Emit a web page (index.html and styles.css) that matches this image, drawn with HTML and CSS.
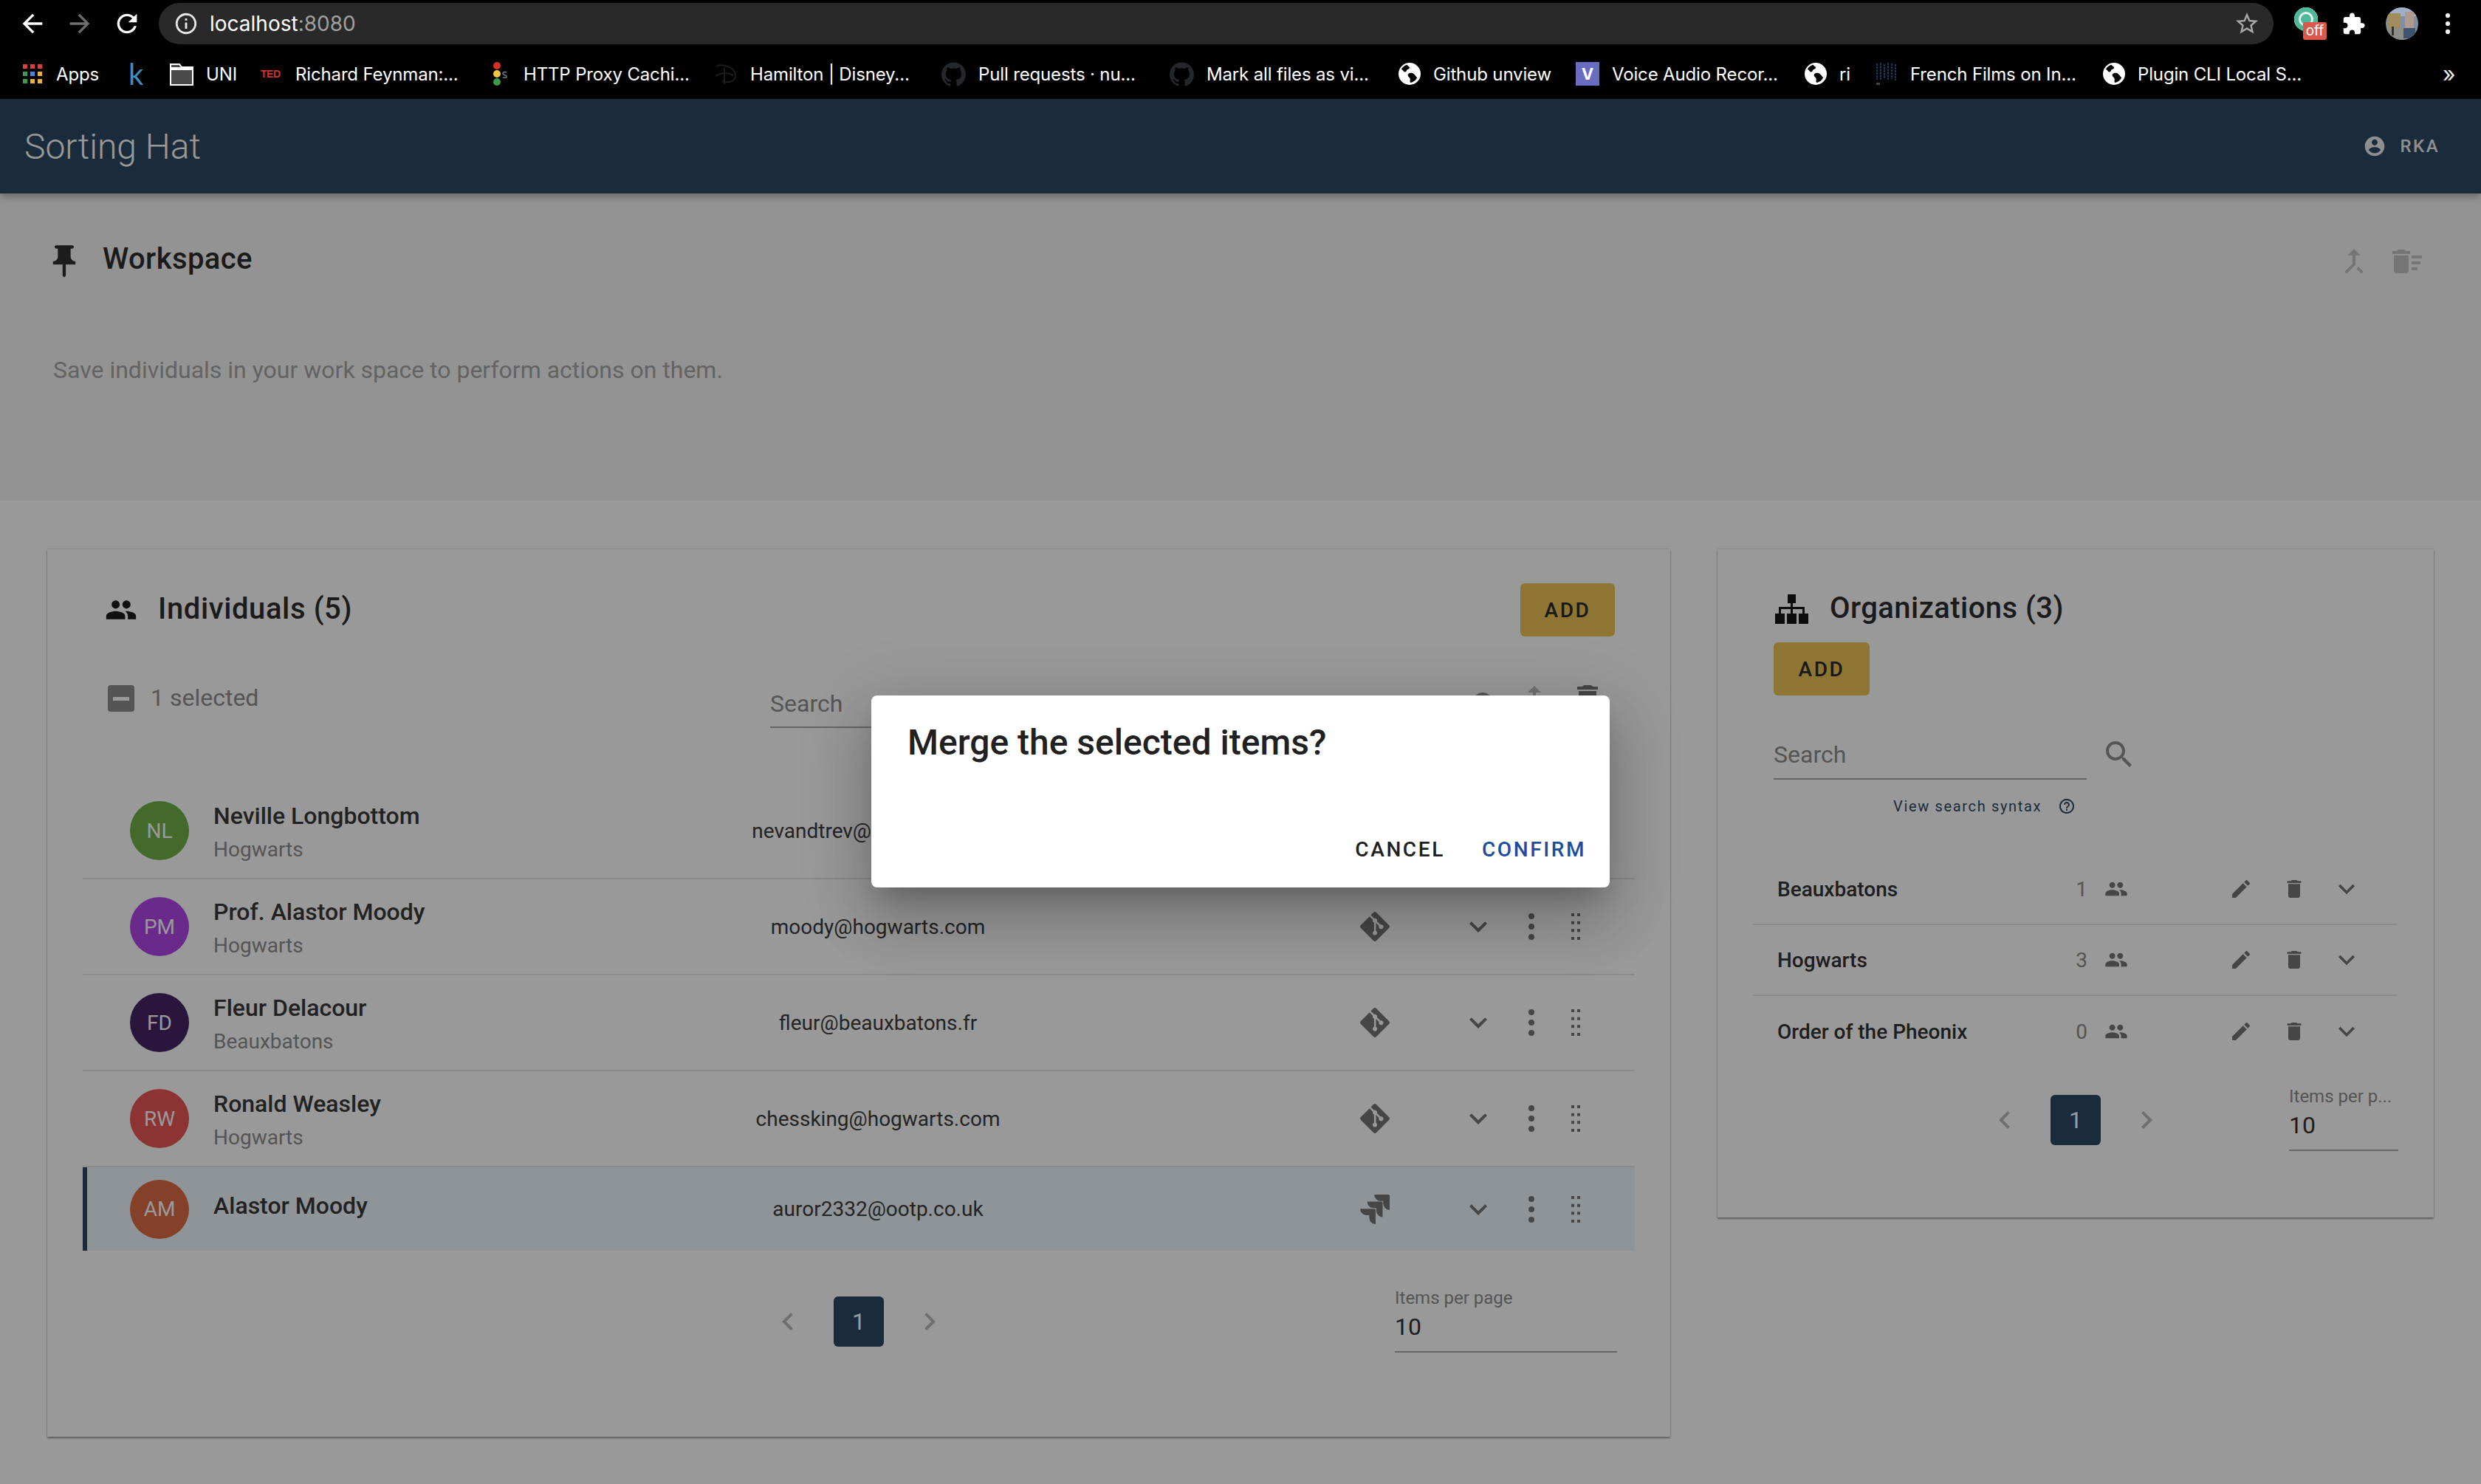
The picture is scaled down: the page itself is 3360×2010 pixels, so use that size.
FILE: index.html
```html
<!DOCTYPE html>
<html lang="en">
<head>
<meta charset="utf-8">
<title>Sorting Hat</title>
<link rel="stylesheet" href="styles.css">
</head>
<body>
<svg class="sprite" xmlns="http://www.w3.org/2000/svg">
  <symbol id="i-back" viewBox="0 0 24 24"><path d="M20 11H7.83l5.59-5.59L12 4l-8 8 8 8 1.41-1.41L7.83 13H20v-2z"/></symbol>
  <symbol id="i-forward" viewBox="0 0 24 24"><path d="M4 11h12.17l-5.59-5.59L12 4l8 8-8 8-1.41-1.41L16.17 13H4v-2z"/></symbol>
  <symbol id="i-reload" viewBox="0 0 24 24"><path d="M17.65 6.35C16.2 4.9 14.21 4 12 4c-4.42 0-7.99 3.58-7.99 8s3.57 8 7.99 8c3.73 0 6.84-2.55 7.73-6h-2.08c-.82 2.33-3.04 4-5.65 4-3.31 0-6-2.69-6-6s2.69-6 6-6c1.66 0 3.14.69 4.22 1.78L13 11h7V4l-2.35 2.35z"/></symbol>
  <symbol id="i-info" viewBox="0 0 24 24"><path d="M11 7h2v2h-2zm0 4h2v6h-2zm1-9C6.48 2 2 6.48 2 12s4.48 10 10 10 10-4.48 10-10S17.52 2 12 2zm0 18c-4.41 0-8-3.59-8-8s3.59-8 8-8 8 3.59 8 8-3.59 8-8 8z"/></symbol>
  <symbol id="i-star" viewBox="0 0 24 24"><path d="M22 9.24l-7.19-.62L12 2 9.19 8.63 2 9.24l5.46 4.73L5.82 21 12 17.27 18.18 21l-1.63-7.03L22 9.24zM12 15.4l-3.76 2.27 1-4.28-3.32-2.88 4.38-.38L12 6.1l1.71 4.04 4.38.38-3.32 2.88 1 4.28L12 15.4z"/></symbol>
  <symbol id="i-puzzle" viewBox="0 0 24 24"><path d="M20.5 11H19V7c0-1.1-.9-2-2-2h-4V3.5C13 2.12 11.88 1 10.5 1S8 2.12 8 3.5V5H4c-1.1 0-1.99.9-1.99 2v3.8H3.5c1.49 0 2.7 1.21 2.7 2.7s-1.21 2.7-2.7 2.7H2V20c0 1.1.9 2 2 2h3.8v-1.5c0-1.49 1.21-2.7 2.7-2.7 1.49 0 2.7 1.21 2.7 2.7V22H17c1.1 0 2-.9 2-2v-4h1.5c1.38 0 2.5-1.12 2.5-2.5S21.88 11 20.5 11z"/></symbol>
  <symbol id="i-github" viewBox="0 0 24 24"><path d="M12 .297c-6.63 0-12 5.373-12 12 0 5.303 3.438 9.8 8.205 11.385.6.113.82-.258.82-.577 0-.285-.01-1.04-.015-2.04-3.338.724-4.042-1.61-4.042-1.61C4.422 18.07 3.633 17.7 3.633 17.7c-1.087-.744.084-.729.084-.729 1.205.084 1.838 1.236 1.838 1.236 1.07 1.835 2.809 1.305 3.495.998.108-.776.417-1.305.76-1.605-2.665-.3-5.466-1.332-5.466-5.93 0-1.31.465-2.38 1.235-3.22-.135-.303-.54-1.523.105-3.176 0 0 1.005-.322 3.3 1.23.96-.267 1.98-.399 3-.405 1.02.006 2.04.138 3 .405 2.28-1.552 3.285-1.23 3.285-1.23.645 1.653.24 2.873.12 3.176.765.84 1.23 1.91 1.23 3.22 0 4.61-2.805 5.625-5.475 5.92.42.36.81 1.096.81 2.22 0 1.606-.015 2.896-.015 3.286 0 .315.21.69.825.57C20.565 22.092 24 17.592 24 12.297c0-6.627-5.373-12-12-12"/></symbol>
  <symbol id="i-globe" viewBox="0 0 24 24"><circle cx="12" cy="12" r="12" fill="#fff"/><path fill="#000" d="M9 2.2C6.5 3 4.4 4.7 3.1 7c1 .4 1.6 1.2 2.2 2 .9 1.200 2.200 1.300 3 .4.500-.600.200-1.300.900-1.900 1-.800 2.400-.800 2.800-2 .300-1-.800-1.500-1.500-2-.500-.400-.900-.900-1.500-1.300zM14 11c-1.300-.300-2.700.200-3.500 1.200-.700 1-.300 2.200.500 3 .800.800 1.500 1.300 1.600 2.500.100 1.100-.300 2-.100 3.100.200.800.800.700 1.400.500 2.700-.900 4.700-2.500 6-4.800.300-.700-.300-1.100-.800-1.600-1.300-1.200-2-3.300-5.100-3.900z"/></symbol>
  <symbol id="i-person" viewBox="0 0 24 24"><path d="M12 2C6.48 2 2 6.48 2 12s4.48 10 10 10 10-4.48 10-10S17.52 2 12 2zm0 3c1.66 0 3 1.340 3 3s-1.340 3-3 3-3-1.340-3-3 1.340-3 3-3zm0 14.200c-2.500 0-4.710-1.280-6-3.220.030-1.990 4-3.080 6-3.080 1.990 0 5.970 1.090 6 3.080-1.290 1.940-3.500 3.220-6 3.220z"/></symbol>
  <symbol id="i-pin" viewBox="0 0 24 24"><path d="M16 9V4h1c.55 0 1-.45 1-1s-.45-1-1-1H7c-.55 0-1 .45-1 1s.45 1 1 1h1v5c0 1.660-1.340 3-3 3v2h5.970v7l1 1 1-1v-7H19v-2c-1.660 0-3-1.340-3-3z"/></symbol>
  <symbol id="i-merge" viewBox="0 0 24 24"><path d="M17 20.410L18.410 19 15 15.590 13.590 17 17 20.410zM7.500 8H11v5.590L5.590 19 7 20.410l6-6V8h3.500L12 3.500 7.500 8z"/></symbol>
  <symbol id="i-sweep" viewBox="0 0 24 24"><path d="M15 16h4v2h-4zm0-8h7v2h-7zm0 4h6v2h-6zM3 18c0 1.100.9 2 2 2h6c1.100 0 2-.9 2-2V8H3v10zM14 5h-3l-1-1H6L5 5H2v2h12z"/></symbol>
  <symbol id="i-people" viewBox="0 0 24 24"><path d="M16 11c1.660 0 2.990-1.340 2.990-3S17.660 5 16 5c-1.660 0-3 1.340-3 3s1.340 3 3 3zm-8 0c1.660 0 2.990-1.340 2.990-3S9.660 5 8 5C6.340 5 5 6.340 5 8s1.340 3 3 3zm0 2c-2.330 0-7 1.170-7 3.500V19h14v-2.500c0-2.330-4.670-3.500-7-3.500zm8 0c-.29 0-.62.020-.97.050 1.160.84 1.970 1.970 1.970 3.450V19h6v-2.500c0-2.330-4.670-3.500-7-3.500z"/></symbol>
  <symbol id="i-delete" viewBox="0 0 24 24"><path d="M6 19c0 1.100.9 2 2 2h8c1.100 0 2-.9 2-2V7H6v12zM19 4h-3.500l-1-1h-5l-1 1H5v2h14V4z"/></symbol>
  <symbol id="i-search" viewBox="0 0 24 24"><path d="M15.500 14h-.79l-.28-.27C15.410 12.590 16 11.110 16 9.500 16 5.910 13.090 3 9.500 3S3 5.910 3 9.500 5.910 16 9.500 16c1.610 0 3.090-.59 4.230-1.570l.27.28v.79l5 4.990L20.490 19l-4.990-5zm-6 0C7.010 14 5 11.990 5 9.500S7.010 5 9.500 5 14 7.010 14 9.500 11.990 14 9.500 14z"/></symbol>
  <symbol id="i-edit" viewBox="0 0 24 24"><path d="M3 17.250V21h3.750L17.810 9.940l-3.750-3.750L3 17.250zM20.710 7.040c.39-.39.39-1.020 0-1.410l-2.340-2.340c-.39-.39-1.020-.39-1.410 0l-1.830 1.830 3.750 3.750 1.830-1.830z"/></symbol>
  <symbol id="i-expand" viewBox="0 0 24 24"><path d="M16.590 8.590L12 13.170 7.410 8.590 6 10l6 6 6-6z"/></symbol>
  <symbol id="i-left" viewBox="0 0 24 24"><path d="M15.410 7.410L14 6l-6 6 6 6 1.410-1.410L10.830 12z"/></symbol>
  <symbol id="i-right" viewBox="0 0 24 24"><path d="M8.590 7.410L10 6l6 6-6 6-1.410-1.410L13.170 12z"/></symbol>
  <symbol id="i-help" viewBox="0 0 24 24"><path d="M11 18h2v-2h-2v2zm1-16C6.480 2 2 6.480 2 12s4.480 10 10 10 10-4.480 10-10S17.520 2 12 2zm0 18c-4.410 0-8-3.590-8-8s3.590-8 8-8 8 3.590 8 8-3.590 8-8 8zm0-14c-2.210 0-4 1.790-4 4h2c0-1.100.9-2 2-2s2 .9 2 2c0 2-3 1.750-3 5h2c0-2.250 3-2.500 3-5 0-2.210-1.790-4-4-4z"/></symbol>
  <symbol id="i-git" viewBox="0 0 24 24"><path d="M23.546 10.930L13.067.452c-.604-.603-1.582-.603-2.188 0L8.708 2.627l2.760 2.760c.645-.215 1.379-.07 1.889.441.516.515.658 1.258.438 1.900l2.658 2.660c.645-.223 1.387-.078 1.900.435.721.720.721 1.884 0 2.604-.719.719-1.881.719-2.600 0-.539-.541-.674-1.337-.404-1.996L12.860 8.955v6.525c.176.086.342.203.488.348.713.721.713 1.883 0 2.600-.719.721-1.889.721-2.609 0-.719-.719-.719-1.879 0-2.598.182-.18.387-.316.605-.406V8.835c-.217-.091-.424-.222-.6-.401-.545-.545-.676-1.342-.396-2.009L7.636 3.700.45 10.881c-.6.605-.6 1.584 0 2.189l10.480 10.477c.604.604 1.582.604 2.186 0l10.430-10.430c.605-.603.605-1.582 0-2.187"/></symbol>
  <symbol id="i-jira" viewBox="0 0 24 24"><path d="M11.571 11.513H0a5.218 5.218 0 0 0 5.232 5.215h2.130v2.057A5.215 5.215 0 0 0 12.575 24V12.518a1.005 1.005 0 0 0-1.005-1.005zm5.723-5.756H5.736a5.215 5.215 0 0 0 5.215 5.214h2.129v2.058a5.218 5.218 0 0 0 5.215 5.214V6.758a1.001 1.001 0 0 0-1.001-1.001zM23.013 0H11.455a5.215 5.215 0 0 0 5.215 5.215h2.129v2.057A5.215 5.215 0 0 0 24 12.483V1.005A1.001 1.001 0 0 0 23.013 0Z"/></symbol>
  <symbol id="i-kebab" viewBox="0 0 8 36"><circle cx="4" cy="4" r="4"/><circle cx="4" cy="18" r="4"/><circle cx="4" cy="32" r="4"/></symbol>
  <symbol id="i-drag" viewBox="0 0 12 36"><path d="M0 0h4v4H0zM8 0h4v4H8zM0 10.670h4v4H0zM8 10.670h4v4H8zM0 21.330h4v4H0zM8 21.330h4v4H8zM0 32h4v4H0zM8 32h4v4H8z"/></symbol>
  <symbol id="i-sitemap" viewBox="0 0 45 40"><path d="M17 0h11v12h-11zM21 12h3v6h-3zM5 17h35v3H5zM5 20h3v6H5zM21 20h3v6h-3zM37 20h3v6h-3zM0 26h13v14H0zM16 26h13v14H16zM32 26h13v14H32z"/></symbol>
</svg>

<header class="browser">
  <div class="toolbar">
    <svg class="nav-icon"><use href="#i-back"/></svg>
    <svg class="nav-icon nav-off"><use href="#i-forward"/></svg>
    <svg class="nav-icon"><use href="#i-reload"/></svg>
    <div class="urlbar">
      <svg class="url-info"><use href="#i-info"/></svg>
      <span class="url-text">localhost<span class="url-port">:8080</span></span>
      <svg class="url-star"><use href="#i-star"/></svg>
    </div>
    <div class="ext">
      <div class="ext-grammar"><span class="ext-ring"></span><span class="ext-off">off</span></div>
      <svg class="ext-puzzle"><use href="#i-puzzle"/></svg>
      <svg class="ext-avatar" viewBox="0 0 44 44">
        <defs><clipPath id="avatar-clip"><circle cx="22" cy="22" r="22"/></clipPath></defs>
        <g clip-path="url(#avatar-clip)">
          <rect width="44" height="44" fill="#7f8fa8"/>
          <rect x="0" y="0" width="44" height="12" fill="#9fb0c8"/>
          <rect x="2" y="8" width="18" height="20" fill="#a08c5c"/>
          <rect x="26" y="6" width="12" height="22" fill="#b09a90"/>
          <rect x="0" y="28" width="44" height="16" fill="#8c8c88"/>
          <rect x="24" y="28" width="16" height="14" fill="#3c5470"/>
          <rect x="8" y="26" width="3" height="12" fill="#38302c"/>
        </g>
      </svg>
      <svg class="ext-menu"><use href="#i-kebab"/></svg>
    </div>
  </div>
  <nav class="bookmarks">
    <div class="bm">
      <span class="bm-apps"><i class="r"></i><i class="r"></i><i class="r"></i><i class="g"></i><i class="b"></i><i class="y"></i><i class="g"></i><i class="y"></i><i class="y"></i></span>
      <span class="bm-label">Apps</span>
    </div>
    <div class="bm"><span class="bm-k">k</span></div>
    <div class="bm">
      <svg class="bm-folder" viewBox="0 0 32 32"><path d="M1 3h12l3 4h15v24H1z" fill="#4a4a4a" stroke="#fff" stroke-width="2"/><path d="M1 7h30v4H1z" fill="#fff"/></svg>
      <span class="bm-label">UNI</span>
    </div>
    <div class="bm"><span class="bm-ted">TED</span><span class="bm-label">Richard Feynman:...</span></div>
    <div class="bm">
      <svg class="bm-traffic" viewBox="0 0 24 32"><circle cx="5" cy="5" r="5" fill="#d93025"/><circle cx="5" cy="16" r="5" fill="#f2c53d"/><circle cx="5" cy="27" r="5" fill="#3f9a44"/><path d="M13 20.500c1 1 5 1.500 5-.8 0-2.500-5-1.500-5-4.200 0-2.300 3.800-2.300 5-1.200" fill="none" stroke="#666" stroke-width="2"/></svg>
      <span class="bm-label">HTTP Proxy Cachi...</span>
    </div>
    <div class="bm">
      <svg class="bm-disney" viewBox="0 0 34 32"><path d="M4 6c8-4 26 0 26 13 0 7-10 10-18 7M15 7v23M3 19c8-6 22-4 24 0" fill="none" stroke="#1c1c1c" stroke-width="2"/></svg>
      <span class="bm-label">Hamilton | Disney...</span>
    </div>
    <div class="bm"><svg class="bm-hub"><use href="#i-github"/></svg><span class="bm-label">Pull requests · nu...</span></div>
    <div class="bm"><svg class="bm-hub"><use href="#i-github"/></svg><span class="bm-label">Mark all files as vi...</span></div>
    <div class="bm"><svg class="bm-globe"><use href="#i-globe"/></svg><span class="bm-label">Github unview</span></div>
    <div class="bm"><span class="bm-v">V</span><span class="bm-label">Voice Audio Recor...</span></div>
    <div class="bm"><svg class="bm-globe"><use href="#i-globe"/></svg><span class="bm-label">ri</span></div>
    <div class="bm">
      <svg class="bm-inst" viewBox="0 0 30 32"><path d="M2 2v22M7 1v23M12 3v20M17 1v24M22 2v21M27 3v22" stroke="#1f4c80" stroke-width="1.500" stroke-dasharray="3 1"/><path d="M1 28h5v3H1z" fill="#444"/></svg>
      <span class="bm-label">French Films on In...</span>
    </div>
    <div class="bm"><svg class="bm-globe"><use href="#i-globe"/></svg><span class="bm-label">Plugin CLI Local S...</span></div>
    <div class="bm"><span class="bm-more">»</span></div>
  </nav>
</header>

<div class="app">
  <header class="appbar">
    <h1 class="app-title">Sorting Hat</h1>
    <div class="user">
      <svg class="user-icon"><use href="#i-person"/></svg>
      <span class="user-name">RKA</span>
    </div>
  </header>

  <section class="workspace">
    <div class="ws-head">
      <svg class="ws-pin"><use href="#i-pin"/></svg>
      <h2 class="ws-title">Workspace</h2>
      <div class="ws-actions">
        <svg class="ws-act"><use href="#i-merge"/></svg>
        <svg class="ws-act"><use href="#i-sweep"/></svg>
      </div>
    </div>
    <p class="ws-text">Save individuals in your work space to perform actions on them.</p>
  </section>

  <main class="boards">
    <section class="card card-ind">
      <div class="ind-head">
        <svg class="ind-icon"><use href="#i-people"/></svg>
        <h2 class="card-title">Individuals (5)</h2>
        <button class="add-btn">ADD</button>
      </div>
      <div class="ind-tools">
        <span class="check"><span class="check-dash"></span></span>
        <span class="sel-label">1 selected</span>
        <div class="search-col">
          <div class="field"><span class="field-text">Search</span></div>
        </div>
        <svg class="tool tool-search"><use href="#i-search"/></svg>
        <svg class="tool tool-merge"><use href="#i-merge"/></svg>
        <svg class="tool tool-del"><use href="#i-delete"/></svg>
      </div>
      <div class="ind-list">
        <article class="person">
          <span class="avatar av-nl">NL</span>
          <div class="p-name"><div class="p-title">Neville Longbottom</div><div class="p-org">Hogwarts</div></div>
          <div class="p-mail">nevandtrev@hogwarts.com</div>
          <svg class="p-src"><use href="#i-git"/></svg>
          <svg class="p-exp"><use href="#i-expand"/></svg>
          <svg class="p-menu"><use href="#i-kebab"/></svg>
          <svg class="p-drag"><use href="#i-drag"/></svg>
        </article>
        <article class="person">
          <span class="avatar av-pm">PM</span>
          <div class="p-name"><div class="p-title">Prof. Alastor Moody</div><div class="p-org">Hogwarts</div></div>
          <div class="p-mail">moody@hogwarts.com</div>
          <svg class="p-src"><use href="#i-git"/></svg>
          <svg class="p-exp"><use href="#i-expand"/></svg>
          <svg class="p-menu"><use href="#i-kebab"/></svg>
          <svg class="p-drag"><use href="#i-drag"/></svg>
        </article>
        <article class="person">
          <span class="avatar av-fd">FD</span>
          <div class="p-name"><div class="p-title">Fleur Delacour</div><div class="p-org">Beauxbatons</div></div>
          <div class="p-mail">fleur@beauxbatons.fr</div>
          <svg class="p-src"><use href="#i-git"/></svg>
          <svg class="p-exp"><use href="#i-expand"/></svg>
          <svg class="p-menu"><use href="#i-kebab"/></svg>
          <svg class="p-drag"><use href="#i-drag"/></svg>
        </article>
        <article class="person">
          <span class="avatar av-rw">RW</span>
          <div class="p-name"><div class="p-title">Ronald Weasley</div><div class="p-org">Hogwarts</div></div>
          <div class="p-mail">chessking@hogwarts.com</div>
          <svg class="p-src"><use href="#i-git"/></svg>
          <svg class="p-exp"><use href="#i-expand"/></svg>
          <svg class="p-menu"><use href="#i-kebab"/></svg>
          <svg class="p-drag"><use href="#i-drag"/></svg>
        </article>
        <article class="person person-sel">
          <span class="avatar av-am">AM</span>
          <div class="p-name"><div class="p-title">Alastor Moody</div></div>
          <div class="p-mail">auror2332@ootp.co.uk</div>
          <svg class="p-src"><use href="#i-jira"/></svg>
          <svg class="p-exp"><use href="#i-expand"/></svg>
          <svg class="p-menu"><use href="#i-kebab"/></svg>
          <svg class="p-drag"><use href="#i-drag"/></svg>
        </article>
      </div>
      <div class="pager pager-ind">
        <div class="pages">
          <svg class="pg-arrow"><use href="#i-left"/></svg>
          <span class="pg-num">1</span>
          <svg class="pg-arrow"><use href="#i-right"/></svg>
        </div>
        <div class="per-page per-wide">
          <div class="per-label">Items per page</div>
          <div class="per-value">10</div>
        </div>
      </div>
    </section>

    <section class="card card-org">
      <div class="org-head">
        <svg class="org-icon"><use href="#i-sitemap"/></svg>
        <h2 class="card-title">Organizations (3)</h2>
      </div>
      <button class="add-btn add-org">ADD</button>
      <div class="org-search">
        <div class="org-field-row">
          <div class="field"><span class="field-text">Search</span></div>
          <svg class="org-search-icon"><use href="#i-search"/></svg>
        </div>
        <div class="hint hint-org"><span>View search syntax</span><svg class="hint-icon"><use href="#i-help"/></svg></div>
      </div>
      <div class="org-list">
        <div class="org">
          <span class="org-name">Beauxbatons</span><span class="org-count">1</span>
          <svg class="org-people"><use href="#i-people"/></svg>
          <svg class="org-edit"><use href="#i-edit"/></svg>
          <svg class="org-del"><use href="#i-delete"/></svg>
          <svg class="org-exp"><use href="#i-expand"/></svg>
        </div>
        <div class="org">
          <span class="org-name">Hogwarts</span><span class="org-count">3</span>
          <svg class="org-people"><use href="#i-people"/></svg>
          <svg class="org-edit"><use href="#i-edit"/></svg>
          <svg class="org-del"><use href="#i-delete"/></svg>
          <svg class="org-exp"><use href="#i-expand"/></svg>
        </div>
        <div class="org">
          <span class="org-name">Order of the Pheonix</span><span class="org-count">0</span>
          <svg class="org-people"><use href="#i-people"/></svg>
          <svg class="org-edit"><use href="#i-edit"/></svg>
          <svg class="org-del"><use href="#i-delete"/></svg>
          <svg class="org-exp"><use href="#i-expand"/></svg>
        </div>
      </div>
      <div class="pager pager-org">
        <div class="pages">
          <svg class="pg-arrow"><use href="#i-left"/></svg>
          <span class="pg-num">1</span>
          <svg class="pg-arrow"><use href="#i-right"/></svg>
        </div>
        <div class="per-page per-narrow">
          <div class="per-label">Items per p...</div>
          <div class="per-value">10</div>
        </div>
      </div>
    </section>
  </main>

  <div class="scrim">
    <div class="dialog">
      <h2 class="dialog-title">Merge the selected items?</h2>
      <div class="dialog-actions">
        <button class="dlg-btn">CANCEL</button>
        <button class="dlg-btn dlg-primary">CONFIRM</button>
      </div>
    </div>
  </div>
</div>
</body>
</html>
```
FILE: styles.css
```css
* { box-sizing: border-box; }
html, body { margin: 0; padding: 0; }
body {
  width: 3360px;
  height: 2010px;
  overflow: hidden;
  background: #fff;
  font-family: Roboto, "Liberation Sans", sans-serif;
  color: #2e2e2e;
}
svg { display: block; flex: none; fill: currentColor; }
h1, h2, p { margin: 0; }
button { font-family: inherit; border: 0; cursor: pointer; }
.sprite { position: absolute; width: 0; height: 0; }

/* browser chrome */
.browser { background: #000; height: 134px; color: #fff; font-family: Inter, Roboto, sans-serif; }
.toolbar { height: 64px; display: flex; align-items: center; padding: 0 0 0 24px; }
.nav-icon { width: 40px; height: 40px; margin-right: 24px; color: #fff; }
.nav-off { color: #6e6e6e; }
.urlbar {
  margin-left: -1px;
  width: 2864px;
  height: 56px;
  border-radius: 28px;
  background: #292929;
  display: flex;
  align-items: center;
  padding: 0 18px 0 20px;
}
.url-info { width: 34px; height: 34px; color: #e8e8e8; }
.url-text { margin-left: 15px; font-size: 28px; color: #fff; }
.url-port { color: #a0a0a0; }
.url-star { margin-left: auto; width: 36px; height: 36px; color: #a8a8a8; }
.ext { flex: 1; display: flex; align-items: center; padding-left: 28px; }
.ext-grammar { position: relative; width: 44px; height: 44px; }
.ext-ring {
  position: absolute; left: 0; top: 0;
  width: 32px; height: 32px; border-radius: 50%;
  background: #4db89a;
  box-shadow: inset 0 0 0 6px #4db89a, inset 0 0 0 9px #e8f5f1;
}
.ext-off {
  position: absolute; left: 12px; top: 20px;
  width: 32px; height: 24px; border-radius: 3px;
  background: #d9594c; color: #fff;
  font-size: 19px; line-height: 24px; text-align: center;
}
.ext-puzzle { margin-left: 20px; width: 33px; height: 33px; color: #fff; }
.ext-avatar { margin-left: 27px; width: 44px; height: 44px; }
.ext-menu { margin-left: 36px; width: 8px; height: 28px; color: #eee; }

.bookmarks {
  height: 70px;
  padding-top: 2px;
  display: grid;
  grid-template-columns: 143px 56px 123px 315px 298px 309px 309px 310px 240px 310px 96px 308px 460px 40px;
  align-items: center;
  padding-left: 31px;
  font-size: 24px;
  font-weight: 400;
  letter-spacing: -.15px;
}
.bm { display: flex; align-items: center; gap: 17px; white-space: nowrap; }
.bm-label { color: #fff; }
.bm-apps { display: grid; grid-template-columns: repeat(3, 6px); gap: 4px; width: 26px; margin-right: 2px; }
.bm-apps i { display: block; width: 6px; height: 6px; }
.bm-apps .r { background: #d9433a; }
.bm-apps .g { background: #3f9a55; }
.bm-apps .b { background: #4a86e0; }
.bm-apps .y { background: #f0b030; }
.bm-k { font-family: Lato, sans-serif; font-size: 40px; line-height: 32px; color: #3e8ec4; }
.bm-folder { width: 32px; height: 32px; }
.bm-ted { width: 30px; font-family: "Liberation Sans", sans-serif; font-weight: 700; font-size: 14px; letter-spacing: -.5px; color: #d0352a; }
.bm-traffic { width: 24px; height: 32px; }
.bm-disney { width: 34px; height: 32px; margin-right: -1px; }
.bm-hub { width: 33px; height: 33px; color: #24282d; }
.bm-globe { width: 30px; height: 30px; }
.bm-v { width: 32px; height: 32px; background: #6a6cc0; color: #fff; font-size: 22px; font-weight: 700; line-height: 32px; text-align: center; }
.bm-inst { width: 30px; height: 32px; }
.bm-more { font-size: 30px; line-height: 30px; color: #eee; }

/* application */
.app { position: relative; height: 1876px; overflow: hidden; background: #fff; }
.appbar {
  position: relative;
  z-index: 1;
  height: 128px;
  background: #2c4a64;
  display: flex;
  align-items: center;
  justify-content: space-between;
  padding: 0 56px 0 33px;
  color: #fff;
  box-shadow: 0 4px 10px rgba(0, 0, 0, .3);
}
.app-title { font-size: 48px; font-weight: 300; }
.user { display: flex; align-items: center; gap: 19px; }
.user-icon { width: 32px; height: 32px; color: #eee; }
.user-name { font-size: 24px; font-weight: 500; letter-spacing: 2.4px; color: #eee; }

.workspace { height: 416px; background: #f5f5f5; padding: 62px 76px 0 61px; }
.ws-head { display: flex; align-items: center; height: 52px; }
.ws-pin { width: 52px; height: 52px; margin-top: 8px; color: #303030; }
.ws-title { margin-left: 26px; font-size: 40px; font-weight: 500; letter-spacing: .4px; color: #2e2e2e; }
.ws-actions { margin-left: auto; margin-top: 8px; display: flex; gap: 24px; }
.ws-act { width: 48px; height: 48px; color: #c4c4c4; }
.ws-text { margin: 101px 0 0 11px; font-size: 32px; line-height: 48px; color: #a6a6a6; }

.boards {
  display: flex;
  align-items: flex-start;
  gap: 64px;
  padding: 66px 64px 0;
}
.card {
  background: #fff;
  box-shadow: 0 2px 2px rgba(0, 0, 0, .35), 0 0 2px rgba(0, 0, 0, .2);
}
.card-title { margin-bottom: 4px; font-size: 40px; font-weight: 500; letter-spacing: .6px; color: #2e2e2e; }
.add-btn {
  width: 128px;
  height: 72px;
  border-radius: 6px;
  background: #eec355;
  color: #2a2a2a;
  font-size: 28px;
  font-weight: 500;
  letter-spacing: 2.6px;
}

/* individuals */
.card-ind { width: 2198px; padding: 46px 48px 114px; }
.ind-head { display: flex; align-items: center; height: 72px; padding: 0 27px 0 32px; }
.ind-icon { width: 44px; height: 44px; margin-left: -2px; color: #1c1c1c; }
.ind-head .card-title { margin-left: 28px; }
.ind-head .add-btn { margin-left: auto; }
.ind-tools { margin-top: 60px; height: 139px; display: flex; align-items: flex-start; padding-left: 34px; }
.check {
  margin-top: 6px;
  width: 36px; height: 36px;
  border-radius: 4px;
  background: #8e8e8e;
  display: flex; align-items: center; justify-content: center;
}
.check-dash { width: 22px; height: 5px; background: #fff; }
.sel-label { margin: 3px 0 0 22px; width: 839px; font-size: 32px; line-height: 40px; color: #8e8e8e; }
.search-col { width: 424px; }
.search-col .field-text { line-height: 62px; }
.field { height: 64px; border-bottom: 2px solid #aaa; }
.field-text { font-size: 32px; line-height: 60px; color: #8e8e8e; }
.hint {
  margin-top: 24px;
  display: flex; align-items: center; justify-content: flex-end; gap: 22px;
  padding-right: 15px;
  font-size: 20px;
  letter-spacing: 1.65px;
  color: #2c4a64;
}
.hint-icon { width: 24px; height: 24px; }
.tool { width: 48px; height: 48px; color: #8e8e8e; }
.tool-search { margin-left: 522px; margin-top: 10px; }
.tool-merge { margin-left: 17px; color: #bbb; }
.tool-del { margin-left: 24px; color: #757575; }

.person {
  display: flex;
  align-items: center;
  height: 130px;
  padding-left: 64px;
  border-bottom: 2px solid #e6e6e6;
}
.person-sel {
  height: 113px;
  padding-left: 58px;
  border-bottom: 0;
  border-left: 6px solid #2c4a64;
  background: #edf7fc;
}
.avatar {
  width: 80px; height: 80px; flex: none;
  border-radius: 50%;
  display: flex; align-items: center; justify-content: center;
  color: #fff;
  font-size: 28px;
  font-weight: 400;
}
.av-nl { background: #70b148; }
.av-pm { background: #b146e9; }
.av-fd { background: #462366; }
.av-rw { background: #ea5555; }
.av-am { background: #de6b46; }
.p-name { margin-left: 33px; width: 600px; padding-top: 7px; }
.p-title { font-size: 32px; font-weight: 500; line-height: 44px; color: #3a3a3a; }
.p-org { font-size: 28px; line-height: 48px; color: #8e8e8e; }
.person-sel .p-name { padding-top: 0; }
.person-sel .p-title { margin-bottom: 10px; }
.p-mail { width: 600px; text-align: center; font-size: 28px; color: #3c3c3c; }
.p-src { margin-left: 353px; width: 40px; height: 40px; color: #757575; }
.p-exp { margin-left: 96px; width: 48px; height: 48px; color: #757575; }
.p-menu { margin-left: 44px; width: 8px; height: 36px; color: #757575; }
.p-drag { margin-left: 50px; width: 12px; height: 36px; color: #757575; }

.pager { display: grid; grid-template-columns: 1fr auto 1fr; align-items: start; }
.pager-ind { padding-top: 50px; }
.pager-org { padding-top: 26px; }
.pager-org .pages { margin-left: 2px; }
.pages { grid-column: 2; display: flex; align-items: center; gap: 38px; margin-top: 12px; }
.pg-arrow { width: 48px; height: 48px; color: #b9b9b9; }
.pg-num {
  width: 68px; height: 68px;
  border-radius: 6px;
  background: #2c4a64;
  color: #fff;
  font-size: 32px;
  display: flex; align-items: center; justify-content: center;
}
.per-page { grid-column: 3; justify-self: end; border-bottom: 2px solid #aaa; padding-bottom: 11px; }
.per-wide { width: 301px; margin-right: 24px; }
.per-narrow { width: 148px; margin-right: -2px; }
.per-label { font-size: 24px; line-height: 28px; color: #8e8e8e; white-space: nowrap; }
.per-value { margin-top: 3px; font-size: 32px; line-height: 44px; color: #333; }

/* organizations */
.card-org { width: 970px; padding: 56px 50px 90px 48px; }
.org-head { display: flex; align-items: center; height: 50px; padding-left: 32px; }
.org-icon { width: 45px; height: 40px; margin-left: -2px; color: #141414; }
.org-head .card-title { margin-left: 29px; letter-spacing: .45px; }
.add-org { display: block; width: 130px; margin: 20px 0 0 28px; }
.org-search { margin: 50px 0 0 28px; height: 165px; }
.org-field-row { display: flex; align-items: flex-start; }
.org-field-row .field { width: 424px; }
.org-search-icon { margin: 6px 0 0 20px; width: 48px; height: 48px; color: #8e8e8e; }
.hint-org { width: 424px; margin-top: 24px; }
.org {
  display: flex;
  align-items: center;
  height: 96px;
  padding-left: 33px;
  border-bottom: 2px solid #e6e6e6;
}
.org:last-child { border-bottom: 0; }
.org-name { width: 393px; font-size: 28px; font-weight: 500; color: #333; }
.org-count { width: 38px; text-align: center; font-size: 28px; color: #8e8e8e; }
.org-people { margin-left: 12px; width: 32px; height: 32px; color: #757575; }
.org-edit { margin-left: 137px; width: 32px; height: 32px; color: #757575; }
.org-del { margin-left: 40px; width: 32px; height: 32px; color: #757575; }
.org-exp { margin-left: 33px; width: 44px; height: 44px; color: #757575; }

/* dialog */
.scrim {
  position: absolute;
  inset: 0;
  z-index: 2;
  background: rgba(0, 0, 0, .4);
  display: flex;
  align-items: center;
  justify-content: center;
}
.dialog {
  width: 1000px;
  height: 260px;
  border-radius: 8px;
  background: #fff;
  padding: 36px 32px 0 49px;
  box-shadow: 0 22px 30px -14px rgba(0, 0, 0, .2), 0 48px 76px 6px rgba(0, 0, 0, .14), 0 18px 92px 16px rgba(0, 0, 0, .12);
}
.dialog-title { font-size: 48px; font-weight: 500; line-height: 56px; color: #212121; }
.dialog-actions { margin-top: 97px; display: flex; justify-content: flex-end; gap: 50px; }
.dlg-btn {
  padding: 0;
  background: none;
  font-size: 28px;
  font-weight: 500;
  letter-spacing: 2.6px;
  line-height: 40px;
  color: #212121;
}
.dlg-primary { color: #1c4da0; }
```
